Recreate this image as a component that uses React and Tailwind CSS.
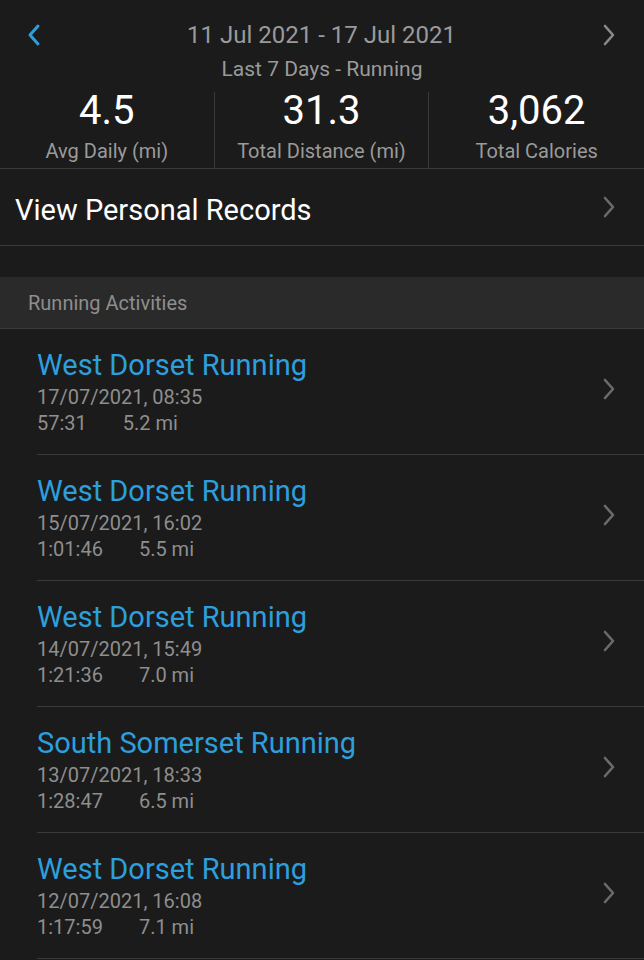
import React from "react";

const Chevron = ({ className = "", color = "#6b6b6b" }) => (
  <svg width="14" height="24" viewBox="0 0 14 24" className={className} fill="none">
    <path d="M3 3 L11 12 L3 21" stroke={color} strokeWidth="2.6" strokeLinecap="round" strokeLinejoin="round" />
  </svg>
);

const ChevronLeft = () => (
  <svg width="14" height="24" viewBox="0 0 14 24" fill="none">
    <path d="M11 3 L3 12 L11 21" stroke="#2d9fdc" strokeWidth="3" strokeLinecap="round" strokeLinejoin="round" />
  </svg>
);

const activities = [
  { title: "West Dorset Running", date: "17/07/2021, 08:35", time: "57:31", dist: "5.2 mi" },
  { title: "West Dorset Running", date: "15/07/2021, 16:02", time: "1:01:46", dist: "5.5 mi" },
  { title: "West Dorset Running", date: "14/07/2021, 15:49", time: "1:21:36", dist: "7.0 mi" },
  { title: "South Somerset Running", date: "13/07/2021, 18:33", time: "1:28:47", dist: "6.5 mi" },
  { title: "West Dorset Running", date: "12/07/2021, 16:08", time: "1:17:59", dist: "7.1 mi" },
];

export default function App() {
  return (
    <div className="w-[644px] h-[960px] overflow-hidden bg-[#1b1b1b]" style={{ fontFamily: "Roboto, 'Liberation Sans', sans-serif" }}>
      {/* Header */}
      <div className="flex items-center justify-between h-[36px] mt-[17px] pl-[27px] pr-[28px]">
        <ChevronLeft />
        <div className="text-[24px] text-[#9a9a9a] leading-none">11 Jul 2021 - 17 Jul 2021</div>
        <Chevron color="#8a8a8a" />
      </div>
      <div className="text-center text-[21px] text-[#9a9a9a] leading-none mt-[6px]">Last 7 Days - Running</div>

      {/* Stats */}
      <div className="grid grid-cols-3 mt-[12px] border-b border-[#3a3a3a] h-[77px]">
        {[
          ["4.5", "Avg Daily (mi)"],
          ["31.3", "Total Distance (mi)"],
          ["3,062", "Total Calories"],
        ].map(([v, l], i) => (
          <div key={i} className={`flex flex-col items-center ${i < 2 ? "border-r border-[#3a3a3a]" : ""}`}>
            <div className="text-[40px] text-white leading-none mt-[-1px]">{v}</div>
            <div className="text-[20px] text-[#9a9a9a] leading-none mt-[10px]">{l}</div>
          </div>
        ))}
      </div>

      {/* Personal records */}
      <div className="flex items-center justify-between h-[77px] pl-[15px] pr-[28px] border-b border-[#3a3a3a]">
        <div className="text-[29px] text-white leading-none mt-[6px]">View Personal Records</div>
        <Chevron />
      </div>

      <div className="h-[31px]" />

      {/* Section header */}
      <div className="bg-[#2a2a2a] h-[52px] flex items-center pl-[28px] border-b border-[#3a3a3a]">
        <div className="text-[20px] text-[#8e8e8e] leading-none">Running Activities</div>
      </div>

      {/* Activities */}
      <div className="pl-[37px]">
        {activities.map((a, i) => (
          <div key={i} className="flex items-center justify-between h-[126px] pr-[28px] border-b border-[#3a3a3a]">
            <div className="flex flex-col mt-[1px]">
              <div className="text-[29px] text-[#2d9fdc] leading-none">{a.title}</div>
              <div className="text-[20px] text-[#8e8e8e] leading-none mt-[7px]">{a.date}</div>
              <div className="text-[20px] text-[#8e8e8e] leading-none mt-[6px] flex">
                <span>{a.time}</span>
                <span className="ml-[36px]">{a.dist}</span>
              </div>
            </div>
            <Chevron className="mt-[-6px]" />
          </div>
        ))}
      </div>
    </div>
  );
}
